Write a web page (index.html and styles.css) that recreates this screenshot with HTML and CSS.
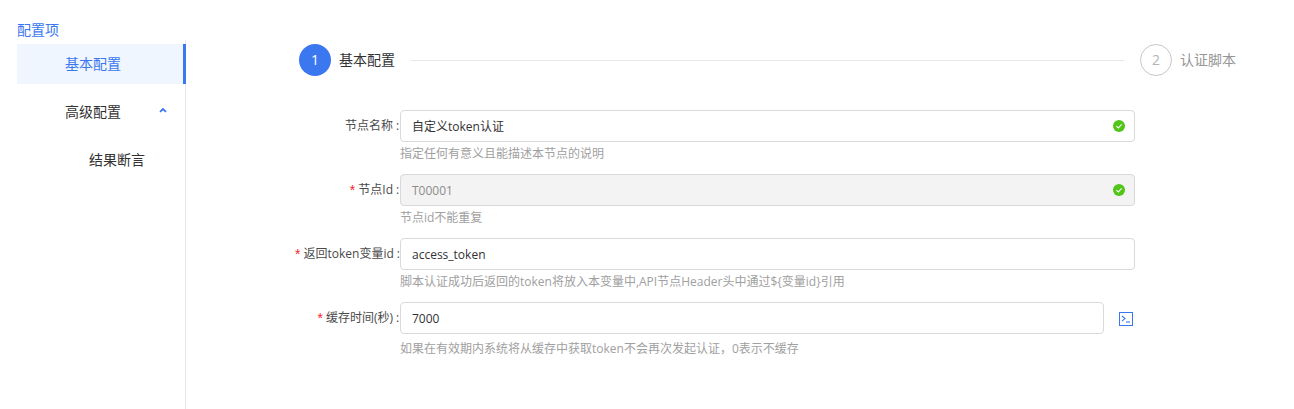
FILE: index.html
```html
<!DOCTYPE html>
<html lang="zh-CN">
<head>
<meta charset="utf-8">
<title>配置项</title>
<link rel="stylesheet" href="styles.css">
</head>
<body>
<div class="page">
  <aside class="side">
    <div class="side-title">配置项</div>
    <ul class="menu">
      <li class="menu-item active">基本配置</li>
      <li class="menu-item">高级配置
        <svg class="caret" viewBox="0 0 8 6" width="8" height="6"><path d="M1 4.8 4 2 7 4.8" fill="none" stroke="#3b78f0" stroke-width="1.8"/></svg>
      </li>
      <li class="menu-item sub">结果断言</li>
    </ul>
  </aside>
  <main class="main">
    <div class="steps">
      <span class="step-num current">1</span>
      <span class="step-text">基本配置</span>
      <span class="step-line"></span>
      <span class="step-num todo">2</span>
      <span class="step-text todo-text">认证脚本</span>
    </div>
    <form class="form">
      <div class="row">
        <label class="label">节点名称<b class="colon">:</b></label>
        <div class="field">
          <div class="input-line">
            <div class="input"><span>自定义token认证</span>
              <svg class="ok" viewBox="0 0 12 12" width="12" height="12"><circle cx="6" cy="6" r="6" fill="#52c41a"/><path d="M3.4 6.1 5.3 8 8.6 4.4" fill="none" stroke="#fff" stroke-width="1.1"/></svg>
            </div>
          </div>
          <div class="help">指定任何有意义且能描述本节点的说明</div>
        </div>
      </div>
      <div class="row">
        <label class="label"><i class="req">*</i>节点Id<b class="colon">:</b></label>
        <div class="field">
          <div class="input-line">
            <div class="input disabled"><span>T00001</span>
              <svg class="ok" viewBox="0 0 12 12" width="12" height="12"><circle cx="6" cy="6" r="6" fill="#52c41a"/><path d="M3.4 6.1 5.3 8 8.6 4.4" fill="none" stroke="#fff" stroke-width="1.1"/></svg>
            </div>
          </div>
          <div class="help">节点id不能重复</div>
        </div>
      </div>
      <div class="row">
        <label class="label"><i class="req">*</i>返回token变量id<b class="colon">:</b></label>
        <div class="field">
          <div class="input-line">
            <div class="input"><span>access_token</span></div>
          </div>
          <div class="help">脚本认证成功后返回的token将放入本变量中,API节点Header头中通过${变量id}引用</div>
        </div>
      </div>
      <div class="row">
        <label class="label"><i class="req">*</i>缓存时间(秒)<b class="colon">:</b></label>
        <div class="field">
          <div class="input-line">
            <div class="input"><span>7000</span></div>
            <svg class="term" viewBox="0 0 14 14" width="14" height="14"><rect x="0.5" y="0.5" width="13" height="13" fill="#fff" stroke="#3b78f0"/><path d="M3 4 6 6.6 3 9.2" fill="none" stroke="#3b78f0" stroke-width="1.1"/><path d="M7 10H11" stroke="#3b78f0" stroke-width="1.1"/></svg>
          </div>
          <div class="help help-far">如果在有效期内系统将从缓存中获取token不会再次发起认证，0表示不缓存</div>
        </div>
      </div>
    </form>
  </main>
</div>
</body>
</html>
```
FILE: styles.css
```css
* { box-sizing: border-box; }
html, body { margin: 0; height: 100%; background: #fff; }
body {
  font-family: "Open Sans", "Noto Sans CJK SC", sans-serif;
  font-size: 14px;
  color: #323233;
  overflow: hidden;
}
.page { display: flex; height: 409px; padding-left: 17px; }
.side { width: 169px; flex: none; padding-top: 20px; }
.side-title { height: 20px; line-height: 20px; font-size: 14px; color: #3b78f0; }
.menu {
  list-style: none;
  margin: 0;
  padding: 4px 0 0;
  height: 369px;
  border-right: 1px solid #e8e8e8;
}
.menu-item {
  position: relative;
  height: 40px;
  line-height: 40px;
  margin-bottom: 8px;
  padding-left: 48px;
  margin-right: -1px;
}
.menu-item.active {
  background: #eff6ff;
  color: #3b78f0;
  border-right: 3px solid #3b78f0;
}
.menu-item.sub { padding-left: 72px; }
.caret { position: absolute; left: 142px; top: 15px; }
.main { flex: 1; padding: 44px 57px 0 113px; }
.steps { display: flex; align-items: center; height: 32px; }
.step-num {
  width: 32px;
  height: 32px;
  flex: none;
  border-radius: 50%;
  text-align: center;
  line-height: 30px;
  font-size: 14px;
}
.step-num.current { background: #3b78f0; color: #fff; line-height: 32px; }
.step-num.todo { border: 1px solid #c8c8c8; color: #b4b4b4; }
.step-text { margin-left: 8px; line-height: 32px; }
.todo-text { color: #969696; margin-right: 1px; }
.step-line { flex: 1; height: 1px; background: #e8e8e8; margin: 0 16px 0 15px; }
.form { padding-top: 34px; }
.row { display: flex; height: 64px; }
.label {
  width: 101px;
  flex: none;
  height: 32px;
  line-height: 32px;
  display: flex;
  justify-content: flex-end;
  white-space: nowrap;
  font-size: 12px;
  color: #4a4a4a;
}
.colon { font-weight: 400; width: 7px; margin-right: 0; padding-left: 3px; }
.req {
  font-style: normal;
  color: #f5222d;
  margin-right: 5px;
  font-size: 14px;
  line-height: 36px;
  font-family: "Liberation Mono", monospace;
  width: 5px;
}
.field { width: 735px; flex: none; }
.input-line { display: flex; align-items: center; }
.input {
  flex: 1;
  height: 32px;
  display: flex;
  align-items: center;
  justify-content: space-between;
  padding: 0 9px 0 11px;
  border: 1px solid #d9d9d9;
  border-radius: 4px;
  font-size: 12px;
  color: #323233;
  background: #fff;
}
.input.disabled { background: #f3f3f3; color: #8c8c8c; }
.term { flex: none; margin: 2px 2px 0 15px; }
.help { margin-top: 2px; height: 20px; line-height: 20px; font-size: 12px; color: #a0a0a0; white-space: nowrap; }
.help-far { margin-top: 5px; }
```
